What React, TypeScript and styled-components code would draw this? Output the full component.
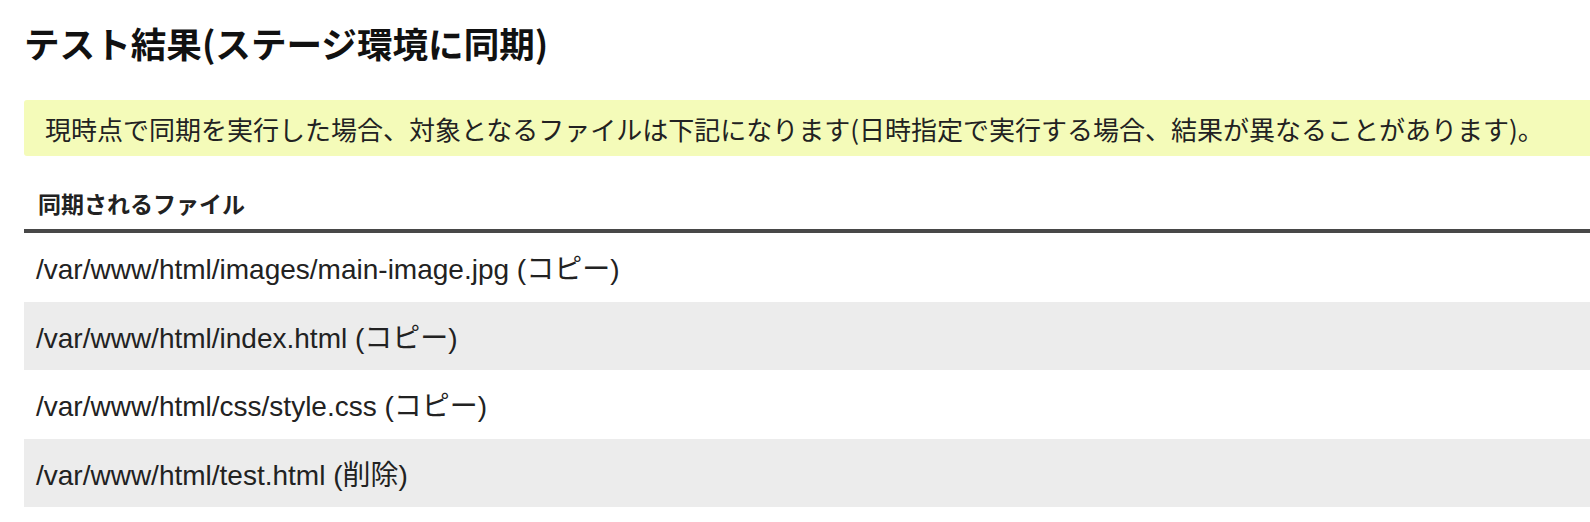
import React from "react";
import styled, { createGlobalStyle } from "styled-components";

const GlobalStyle = createGlobalStyle`
  html, body {
    margin: 0;
    padding: 0;
    background: #ffffff;
  }
  body {
    font-family: "Liberation Sans", Arial, "Noto Sans CJK JP", sans-serif;
    color: #222222;
  }
`;

const Page = styled.main`
  padding: 18px 0 0 24px;
  overflow: hidden;
`;

const Title = styled.h1`
  margin: 0;
  font-family: "Noto Sans CJK JP", sans-serif;
  font-weight: 700;
  font-size: 35.6px;
  line-height: 50px;
  color: #111111;
`;

const Notice = styled.div`
  margin-top: 32px;
  height: 56px;
  display: flex;
  align-items: center;
  padding-left: 21px;
  background: #f4fbb9;
  border-radius: 3px 0 0 3px;
  font-family: "Noto Sans CJK JP", sans-serif;
  font-size: 26px;
  color: #222222;
  white-space: nowrap;
`;

const FileTable = styled.table`
  margin-top: 20px;
  width: 100%;
  border-collapse: collapse;
`;

const HeadCell = styled.th`
  text-align: left;
  padding: 0 0 0 14px;
  height: 53px;
  vertical-align: middle;
  font-family: "Noto Sans CJK JP", sans-serif;
  font-weight: 700;
  font-size: 23px;
  color: #222222;
  border-bottom: 4px solid #484848;
`;

const Row = styled.tr<{ $striped: boolean }>`
  background: ${(p) => (p.$striped ? "#ececec" : "#ffffff")};
`;

const Cell = styled.td`
  height: 68.5px;
  padding: 0 0 0 12px;
  vertical-align: middle;
  font-family: "Liberation Sans", Arial, "Noto Sans CJK JP", sans-serif;
  font-size: 28px;
  color: #222222;
  white-space: nowrap;
`;

const files = [
  "/var/www/html/images/main-image.jpg (コピー)",
  "/var/www/html/index.html (コピー)",
  "/var/www/html/css/style.css (コピー)",
  "/var/www/html/test.html (削除)",
];

export default function App() {
  return (
    <>
      <GlobalStyle />
      <Page>
        <Title>テスト結果(ステージ環境に同期)</Title>
        <Notice>
          現時点で同期を実行した場合、対象となるファイルは下記になります(日時指定で実行する場合、結果が異なることがあります)。
        </Notice>
        <FileTable>
          <thead>
            <tr>
              <HeadCell>同期されるファイル</HeadCell>
            </tr>
          </thead>
          <tbody>
            {files.map((f, i) => (
              <Row key={f} $striped={i % 2 === 1}>
                <Cell>{f}</Cell>
              </Row>
            ))}
          </tbody>
        </FileTable>
      </Page>
    </>
  );
}
